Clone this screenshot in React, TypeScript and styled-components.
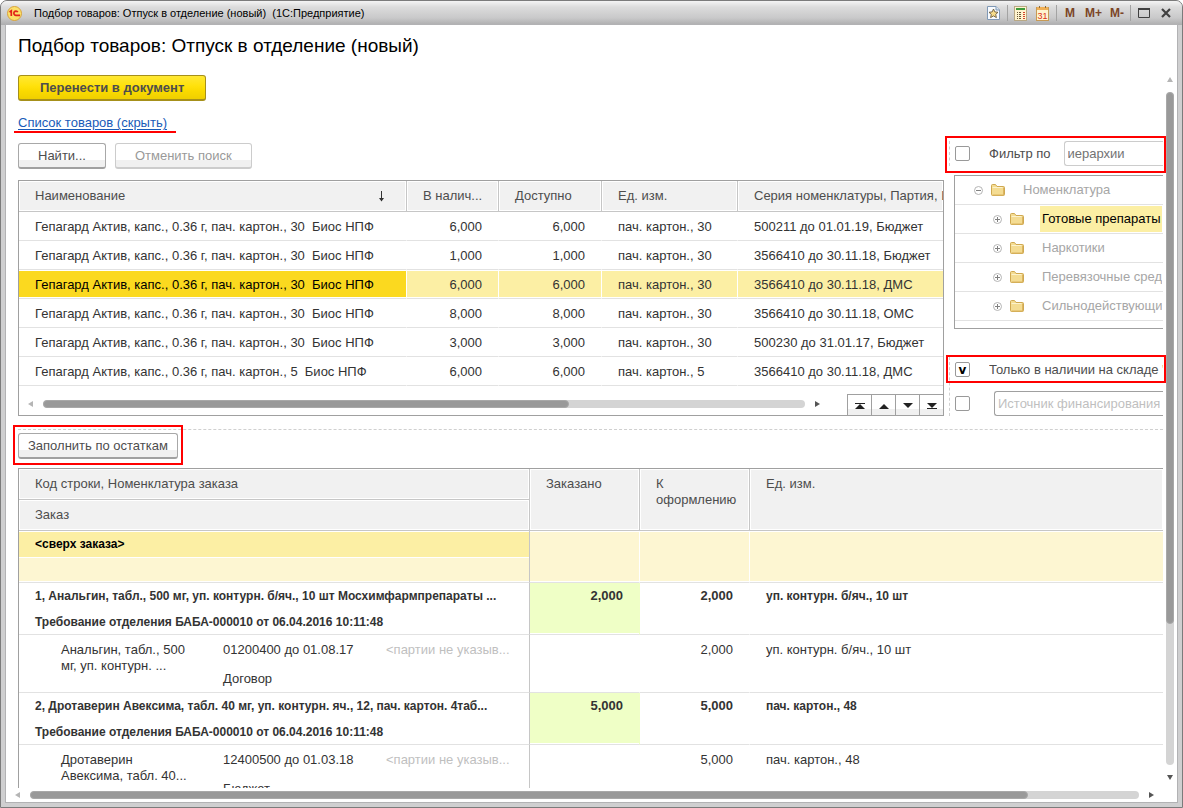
import React from "react";
import styled, { createGlobalStyle, css } from "styled-components";

const GlobalStyle = createGlobalStyle`
  *, *::before, *::after { box-sizing: border-box; }
  body { margin: 0; background: #fff; }
  body, button, input, table {
    font-family: "Liberation Sans", Arial, sans-serif;
    font-size: 13px;
    line-height: 16px;
    color: #333;
  }
`;

/* ---------- window frame ---------- */

const Window = styled.div`
  display: flex;
  flex-direction: column;
  height: 100vh;
  padding: 0 5px 5px;
  border: 1px solid #7b7b7b;
  border-radius: 7px 7px 0 0;
  background: #cfcfd0;
  overflow: hidden;
`;

const TitleBar = styled.header`
  display: flex;
  align-items: center;
  flex: none;
  height: 24px;
  margin: 0 -5px;
  padding: 0 9px 0 6px;
  background: linear-gradient(#f4f4f4, #dcdcdc 25%, #c9c9ca 70%, #adadae);
`;

const WindowTitle = styled.div`
  flex: 1;
  margin-left: 12px;
  font-size: 11px;
  color: #000;
  white-space: pre;
`;

const TitleTools = styled.div`
  display: flex;
  align-items: center;
  gap: 8px;
`;

const TitleDivider = styled.span`
  width: 1px;
  height: 16px;
  margin: 0 -2px;
  background: #a3a3a3;
`;

const TitleButton = styled.button`
  display: flex;
  align-items: center;
  justify-content: center;
  min-width: 14px;
  height: 18px;
  padding: 0;
  border: 0;
  background: none;
  font-size: 12px;
  font-weight: bold;
  color: #7b4526;
`;

const Client = styled.main`
  display: flex;
  flex-direction: column;
  flex: 1;
  min-height: 0;
  background: #fff;
  box-shadow: 0 0 0 1px #b2b2b4;
`;

const Heading = styled.h1`
  flex: none;
  margin: 0;
  padding: 9px 12px 17px;
  font-size: 19px;
  line-height: 24px;
  font-weight: normal;
  color: #000;
`;

const Workspace = styled.div`
  display: flex;
  flex: 1;
  min-height: 0;
`;

const Pane = styled.div`
  display: flex;
  flex-direction: column;
  flex: 1;
  min-width: 0;
  padding-left: 12px;
`;

/* ---------- scroll bars ---------- */

const ScrollBar = styled.div<{ $vertical?: boolean }>`
  display: flex;
  align-items: center;
  flex-direction: ${(p) => (p.$vertical ? "column" : "row")};
  flex: none;
  gap: 10px;
`;

const PaneVScroll = styled(ScrollBar)`
  width: 8px;
  margin: 2px 3px 8px;
`;

const PaneHScroll = styled(ScrollBar)`
  padding: 3px 23px 3px 9px;
`;

const ScrollTrack = styled.div<{ $vertical?: boolean }>`
  flex: 1;
  display: flex;
  flex-direction: ${(p) => (p.$vertical ? "column" : "row")};
  ${(p) => (p.$vertical ? "width: 8px;" : "height: 8px;")}
  border-radius: 4px;
  background: #d4d4d4;
`;

const ScrollThumb = styled.div<{ $share: number }>`
  flex: 0 0 ${(p) => p.$share}%;
  border: 1px solid #a8a8a8;
  border-radius: 4px;
  background: #999;
`;

/* ---------- controls ---------- */

const Button = styled.button`
  height: 26px;
  padding: 0 19px;
  border: 1px solid #a8a8a8;
  border-bottom: 2px solid #a0a0a0;
  border-radius: 3px;
  background: linear-gradient(#fff 0 70%, #f0f0f0 70%);
  color: #4d4d4d;
  white-space: nowrap;

  &:disabled {
    border-color: #ccc;
    color: #999;
  }
`;

const PrimaryButton = styled(Button)`
  align-self: flex-start;
  flex: none;
  padding: 0 21px;
  border-color: #a6901a;
  background: linear-gradient(#ffe834, #ffe10a 45%, #fada00 65%, #efcf00);
  font-weight: bold;
`;

const FillButton = styled(Button)`
  padding: 0 9px;
`;

const CheckBox = styled.input`
  appearance: none;
  display: grid;
  place-items: center;
  flex: none;
  width: 15px;
  height: 15px;
  margin: 0;
  border: 1px solid #999;
  border-radius: 2px;
  background: #fff;

  &:checked::before {
    content: "v";
    font-family: "DejaVu Sans", sans-serif;
    font-size: 12px;
    line-height: 12px;
    font-weight: bold;
    color: #000;
  }
`;

const TextField = styled.input<{ $strong?: boolean }>`
  flex: 1;
  min-width: 0;
  height: 25px;
  padding: 0 3px;
  border: 1px solid ${(p) => (p.$strong ? "#a0a0a0" : "#ccc")};
  border-right: 0;
  border-radius: 3px 0 0 3px;
  background: #fff;
  color: #737373;
  outline: 0;

  &::placeholder {
    color: #bfbfbf;
    opacity: 1;
  }
`;

const Highlight = styled.span<{ $inset: string }>`
  position: absolute;
  inset: ${(p) => p.$inset};
  border: 2px solid #f00;
  pointer-events: none;
`;

const Underscore = styled.span`
  position: absolute;
  inset: auto -9px -2px -4px;
  height: 2px;
  background: #f00;
`;

/* ---------- goods section ---------- */

const GoodsSection = styled.section`
  display: flex;
  flex: none;
  gap: 5px;
`;

const GoodsColumn = styled.div`
  display: flex;
  flex-direction: column;
  flex: 1;
  min-width: 0;
`;

const ToggleLine = styled.div`
  position: relative;
  align-self: flex-start;
  margin-top: 14px;
`;

const ToggleLink = styled.a`
  color: #1a5bb8;
  text-decoration: underline;
  text-underline-offset: 2px;
`;

const SearchBar = styled.div`
  display: flex;
  gap: 9px;
  margin: 12px 0 11px;
`;

const GridFrame = styled.div`
  border: 1px solid #a0a0a0;
  overflow: hidden;
`;

const DataTable = styled.table`
  width: 100%;
  table-layout: fixed;
  border-collapse: separate;
  border-spacing: 0;
`;

const Column = styled.col<{ $width?: number }>`
  width: ${(p) => (p.$width ? `${p.$width}px` : "auto")};
`;

const HeadCell = styled.th<{ $tall?: boolean; $edge?: boolean }>`
  height: 31px;
  padding: ${(p) => (p.$tall ? "7px 15px 0 16px" : "0 15px 0 16px")};
  vertical-align: ${(p) => (p.$tall ? "top" : "middle")};
  border-right: 1px solid #c6c6c6;
  border-bottom: 1px solid #c6c6c6;
  background: #f1f1f1;
  box-shadow: inset 0 0 0 1px #fff;
  font-weight: normal;
  text-align: left;
  color: #4d4d4d;
  white-space: ${(p) => (p.$tall ? "normal" : "nowrap")};
  overflow: hidden;

  ${(p) => !p.$edge && "&:last-child { border-right: 0; }"}
`;

const SortHeader = styled.span`
  display: flex;
  align-items: center;
  justify-content: space-between;
  padding-right: 6px;
`;

const GoodsRow = styled.tr<{ $selected?: boolean }>`
  td {
    height: 29px;
    padding: 1px 16px 0;
    border-bottom: 1px solid #e2e2e2;
    border-right: 1px solid transparent;
    white-space: pre;
    overflow: hidden;
  }
  td:last-child { border-right: 0; }
  ${(p) =>
    p.$selected &&
    css`
      td {
        border-right-color: #fff;
        background: #fcefa4;
        box-shadow: inset 0 1px #fff, inset 0 -1px #fff;
      }
      td:first-child {
        background: #fbd91f;
        color: #000;
      }
    `}
`;

const NumberCell = styled.td`
  text-align: right;
`;

const GridFooter = styled.div`
  display: flex;
  align-items: flex-end;
  justify-content: space-between;
  gap: 27px;
  height: 29px;
  padding-left: 9px;
`;

const GridHScroll = styled(ScrollBar)`
  flex: 1;
  padding-bottom: 7px;
`;

const RowButtons = styled.div`
  display: flex;
`;

const RowButton = styled.button`
  display: grid;
  place-items: center;
  width: 24px;
  height: 21px;
  padding: 1px 0 0;
  border: solid #a0a0a0;
  border-width: 1px 0 0 1px;
  background: linear-gradient(#fff 0 70%, #f0f0f0 70%);
`;

/* ---------- filter panel ---------- */

const FilterColumn = styled.aside`
  flex: none;
  width: 214px;
  padding-top: 40px;
`;

const FilterGroup = styled.div`
  display: flex;
  flex-direction: column;
  gap: 9px;
  border-left: 1px dashed #d0d0d0;
`;

const FilterRow = styled.div`
  position: relative;
  display: flex;
  align-items: center;
  height: 25px;
  padding-left: 5px;
`;

const FilterLabel = styled.label`
  margin-left: 19px;
  padding-right: 13px;
  color: #4d4d4d;
  white-space: nowrap;
`;

const ClippedLabel = styled(FilterLabel)`
  flex: 1;
  min-width: 0;
  padding: 0;
  overflow: hidden;
`;

const SourceField = styled(TextField)`
  margin-left: 24px;
`;

const Tree = styled.ul`
  height: 154px;
  margin: 9px 0 28px 5px;
  padding: 0;
  border: 1px solid #a0a0a0;
  border-right: 0;
  list-style: none;
  overflow: hidden;
`;

const TreeItem = styled.li<{ $level: number; $selected?: boolean }>`
  display: flex;
  align-items: center;
  height: 29px;
  padding-left: ${(p) => (p.$level ? 38 : 19)}px;
  border-bottom: 1px solid #e2e2e2;
  color: #a6a6a6;
  white-space: nowrap;

  svg + svg { margin-left: 8px; }

  span {
    flex: 1;
    margin: 0 1px 0 16px;
    padding: 5px 0 5px 2px;
    overflow: hidden;
    ${(p) => p.$selected && "background: #fcefa4; color: #000;"}
  }
`;

/* ---------- order section ---------- */

const OrderBar = styled.div`
  flex: none;
  margin: 13px 0 9px;
  padding-top: 3px;
  border-top: 1px dashed #d0d0d0;
`;

const OrderAction = styled.div`
  position: relative;
  display: inline-flex;
  vertical-align: top;
`;

const OrderFrame = styled.section`
  flex: 1;
  min-height: 0;
  border: solid #a0a0a0;
  border-width: 1px 0 0 1px;
  overflow: hidden;
`;

type Tone = "over" | "order" | "batch";

const OrderRow = styled.tr<{ $tone: Tone }>`
  td {
    height: ${(p) => (p.$tone === "batch" ? 58 : 52)}px;
    padding: ${(p) => (p.$tone === "batch" ? 7 : 5)}px 16px 0;
    border-right: 1px solid transparent;
    border-bottom: 1px solid #e2e2e2;
    vertical-align: top;
    white-space: nowrap;
    font-weight: ${(p) => (p.$tone === "batch" ? "normal" : "bold")};
    overflow: hidden;
  }
  ${(p) =>
    p.$tone === "over" &&
    css`
      td {
        padding: 0;
        border-right-color: #fff;
        background: #fdf6d2;
        box-shadow: inset 0 1px #fff, inset 0 -1px #fff;
      }
    `}
  td:first-child { border-right-color: #c6c6c6; }
  td:last-child { border-right: 0; }
`;

const OverCaption = styled.div`
  height: 26px;
  margin-top: 1px;
  padding: 4px 16px;
  border-bottom: 1px solid #fff;
  background: #fcefa4;
  font-size: 12px;
  color: #000;
`;

const OrderLines = styled.div`
  font-size: 12px;
  line-height: 16px;

  div + div { margin-top: 10px; }
`;

const OrderedCell = styled(NumberCell)<{ $filled?: boolean }>`
  ${(p) => p.$filled && "background: #efffc6; box-shadow: inset 0 -1px #fff;"}
`;

const UnitCell = styled.td<{ $bold?: boolean }>`
  font-size: ${(p) => (p.$bold ? 12 : 13)}px;
`;

const BatchGrid = styled.div`
  display: grid;
  grid-template-columns: 162px 163px 1fr;
  padding-left: 26px;
`;

const BatchFund = styled.div`
  margin-top: 13px;
`;

const Muted = styled.div`
  margin-right: -16px;
  color: #bfbfbf;
`;

/* ---------- icons ---------- */

type Dir = "up" | "down" | "left" | "right";
const arrowPoints: Record<Dir, string> = {
  up: "0,5 3,0 6,5",
  down: "0,0 3,5 6,0",
  left: "5,0 0,3 5,6",
  right: "0,0 5,3 0,6",
};

const ArrowSvg = styled.svg`
  flex: none;
`;

const Arrow = ({ dir, color }: { dir: Dir; color: string }) => {
  const flat = dir === "up" || dir === "down";
  return (
    <ArrowSvg width={flat ? 6 : 5} height={flat ? 5 : 6}>
      <polygon points={arrowPoints[dir]} fill={color} />
    </ArrowSvg>
  );
};

const RowIcon = ({ up, bar }: { up?: boolean; bar?: boolean }) => (
  <svg width="12" height="8" viewBox="0 0 12 8" fill="#222">
    {up ? <polygon points="1,7 6,2 11,7" /> : <polygon points="1,1 6,6 11,1" />}
    {bar && <rect x="1" y={up ? 1 : 6} width="10" height="1" />}
  </svg>
);

const Logo = () => (
  <svg width="15" height="15" viewBox="0 0 15 15">
    <circle cx="7.500" cy="7.500" r="7" fill="#fbe06a" stroke="#d8a33c" />
    <path d="M2.500 6 4.300 4.800V10M10.800 6.200A2.100 2.100 0 1 0 8.800 9.300H13" fill="none" stroke="#e2231a" strokeWidth="1.700" />
  </svg>
);

const StarIcon = () => (
  <svg width="13" height="14" viewBox="0 0 13 14">
    <path d="M.5.5h8.500l3.500 3.500v9.500H.5z" fill="#f8fbff" stroke="#7f98b5" />
    <path d="M9 .5V4h3.500" fill="#dbe6f2" stroke="#7f98b5" />
    <path d="m6.500 3 1.300 2.900 3.200.4-2.300 2.100.7 3.200-2.900-1.700-2.900 1.700.7-3.200-2.300-2.100 3.200-.4z" fill="#f7dc8a" stroke="#6b5a3a" strokeWidth=".9" />
  </svg>
);

const CalcIcon = () => (
  <svg width="13" height="15" viewBox="0 0 13 15">
    <rect x=".5" y=".5" width="12" height="14" fill="#fff4cf" stroke="#b9a884" />
    <rect x="2" y="2" width="9" height="2" fill="#3e9b3a" />
    {[6, 8, 10, 12].map((y) => (
      <g key={y}>
        <rect x="3" y={y} width="1" height="1" fill="#6b5a3a" />
        <rect x="5" y={y} width="2" height="1" fill="#6b5a3a" />
        <rect x="9" y={y} width="2" height="1" fill="#d2452c" />
      </g>
    ))}
  </svg>
);

const CalendarIcon = () => (
  <svg width="13" height="15" viewBox="0 0 13 15">
    <rect x=".5" y="1.500" width="12" height="13" fill="#fff4cf" stroke="#c79a55" />
    <rect x="1" y="1" width="11" height="3" fill="#f0b056" />
    <path d="M3.500 0v2M9.500 0v2" stroke="#8a6a3c" />
    <text x="6.500" y="13" textAnchor="middle" fontSize="9" fontWeight="normal" fill="#dc3018">31</text>
  </svg>
);

const MaximizeIcon = () => (
  <svg width="12" height="10" viewBox="0 0 12 10">
    <path d="M.5 1h11v8.500H.5z" fill="none" stroke="#404040" />
    <path d="M0 1h12" stroke="#404040" strokeWidth="2" />
  </svg>
);

const CloseIcon = () => (
  <svg width="10" height="10" viewBox="0 0 10 10">
    <path d="m1 1 8 8M9 1 1 9" stroke="#404040" strokeWidth="2.200" />
  </svg>
);

const SortIcon = () => (
  <svg width="7" height="11" viewBox="0 0 7 11">
    <path d="M3.500 0v10" stroke="#333" />
    <path d="M1 7h5L3.500 10.500z" fill="#333" />
  </svg>
);

const Expander = ({ open }: { open?: boolean }) => (
  <svg width="9" height="9" viewBox="0 0 9 9" fill="none">
    <circle cx="4.500" cy="4.500" r="4" stroke="#b5b5b5" />
    <path d={open ? "M2 4.500h5" : "M2 4.500h5M4.500 2v5"} stroke="#808080" />
  </svg>
);

const Folder = () => (
  <svg width="14" height="12" viewBox="0 0 14 12">
    <path d="M.5 10.500v-9q0-1 1-1h3l1.500 2h6.500q1 0 1 1v7q0 1-1 1h-11q-1 0-1-1z" fill="#f4dc92" stroke="#cfa850" />
    <path d="M1.500 3.500h10" stroke="#fcf2cc" />
    <path d="M12.500 3.500v7.500H1.500" fill="none" stroke="#dcb560" />
  </svg>
);

/* ---------- data ---------- */

const goods = [
  ["30", "6,000", "500211 до 01.01.19, Бюджет"],
  ["30", "1,000", "3566410 до 30.11.18, Бюджет"],
  ["30", "6,000", "3566410 до 30.11.18, ДМС"],
  ["30", "8,000", "3566410 до 30.11.18, ОМС"],
  ["30", "3,000", "500230 до 31.01.17, Бюджет"],
  ["5", "6,000", "3566410 до 30.11.18, ДМС"],
];
const selectedGoods = 2;

const tree = ["Готовые препараты", "Наркотики", "Перевязочные средства", "Сильнодействующие"];

const orders = [
  {
    title: "1, Анальгин, табл., 500 мг, уп. контурн. б/яч., 10 шт Мосхимфармпрепараты ...",
    qty: "2,000",
    unit: "уп. контурн. б/яч., 10 шт",
    name: ["Анальгин, табл., 500", "мг, уп. контурн. ..."],
    batch: "01200400 до 01.08.17",
    fund: "Договор",
  },
  {
    title: "2, Дротаверин Авексима, табл. 40 мг, уп. контурн. яч., 12, пач. картон. 4таб...",
    qty: "5,000",
    unit: "пач. картон., 48",
    name: ["Дротаверин", "Авексима, табл. 40..."],
    batch: "12400500 до 01.03.18",
    fund: "Бюджет",
  },
];

/* ---------- page ---------- */

export default function App() {
  return (
    <>
      <GlobalStyle />
      <Window>
        <TitleBar>
          <Logo />
          <WindowTitle>{"Подбор товаров: Отпуск в отделение (новый)  (1С:Предприятие)"}</WindowTitle>
          <TitleTools>
            <TitleButton aria-label="Избранное"><StarIcon /></TitleButton>
            <TitleDivider />
            <TitleButton aria-label="Калькулятор"><CalcIcon /></TitleButton>
            <TitleButton aria-label="Календарь"><CalendarIcon /></TitleButton>
            <TitleDivider />
            <TitleButton>M</TitleButton>
            <TitleButton>M+</TitleButton>
            <TitleButton>M-</TitleButton>
            <TitleDivider />
            <TitleButton aria-label="Развернуть"><MaximizeIcon /></TitleButton>
            <TitleButton aria-label="Закрыть"><CloseIcon /></TitleButton>
          </TitleTools>
        </TitleBar>

        <Client>
          <Heading>Подбор товаров: Отпуск в отделение (новый)</Heading>
          <Workspace>
            <Pane>
              <PrimaryButton>Перенести в документ</PrimaryButton>

              <GoodsSection>
                <GoodsColumn>
                  <ToggleLine>
                    <ToggleLink href="#goods">Список товаров (скрыть)</ToggleLink>
                    <Underscore />
                  </ToggleLine>
                  <SearchBar>
                    <Button>Найти...</Button>
                    <Button disabled>Отменить поиск</Button>
                  </SearchBar>

                  <GridFrame id="goods">
                    <DataTable>
                      <colgroup>
                        <Column $width={388} />
                        <Column $width={92} />
                        <Column $width={103} />
                        <Column $width={136} />
                        <Column />
                      </colgroup>
                      <thead>
                        <tr>
                          <HeadCell><SortHeader>Наименование<SortIcon /></SortHeader></HeadCell>
                          <HeadCell>В налич...</HeadCell>
                          <HeadCell>Доступно</HeadCell>
                          <HeadCell>Ед. изм.</HeadCell>
                          <HeadCell>Серия номенклатуры, Партия, Источник</HeadCell>
                        </tr>
                      </thead>
                      <tbody>
                        {goods.map(([pack, qty, series], i) => (
                          <GoodsRow key={i} $selected={i === selectedGoods}>
                            <td>{`Гепагард Актив, капс., 0.36 г, пач. картон., ${pack}  Биос НПФ`}</td>
                            <NumberCell>{qty}</NumberCell>
                            <NumberCell>{qty}</NumberCell>
                            <td>{`пач. картон., ${pack}`}</td>
                            <td>{series}</td>
                          </GoodsRow>
                        ))}
                      </tbody>
                    </DataTable>
                    <GridFooter>
                      <GridHScroll>
                        <Arrow dir="left" color="#b5b5b5" />
                        <ScrollTrack><ScrollThumb $share={69} /></ScrollTrack>
                        <Arrow dir="right" color="#555" />
                      </GridHScroll>
                      <RowButtons>
                        <RowButton aria-label="В начало"><RowIcon up bar /></RowButton>
                        <RowButton aria-label="Вверх"><RowIcon up /></RowButton>
                        <RowButton aria-label="Вниз"><RowIcon /></RowButton>
                        <RowButton aria-label="В конец"><RowIcon bar /></RowButton>
                      </RowButtons>
                    </GridFooter>
                  </GridFrame>
                </GoodsColumn>

                <FilterColumn>
                  <FilterGroup>
                    <FilterRow>
                      <CheckBox type="checkbox" id="by-filter" />
                      <FilterLabel htmlFor="by-filter">Фильтр по</FilterLabel>
                      <TextField aria-label="Фильтр по" defaultValue="иерархии" />
                      <Highlight $inset="-5px -3px -7px -5px" />
                    </FilterRow>
                  </FilterGroup>
                  <Tree>
                    <TreeItem $level={0}><Expander open /><Folder /><span>Номенклатура</span></TreeItem>
                    {tree.map((name, i) => (
                      <TreeItem key={name} $level={1} $selected={i === 0}>
                        <Expander /><Folder /><span>{name}</span>
                      </TreeItem>
                    ))}
                  </Tree>
                  <FilterGroup>
                    <FilterRow>
                      <CheckBox type="checkbox" id="in-stock" defaultChecked />
                      <ClippedLabel htmlFor="in-stock">Только в наличии на складе "Аптека"</ClippedLabel>
                      <Highlight $inset="-2px -3px -1px -4px" />
                    </FilterRow>
                    <FilterRow>
                      <CheckBox type="checkbox" aria-label="Источник финансирования" />
                      <SourceField $strong aria-label="Источник финансирования" placeholder="Источник финансирования" />
                    </FilterRow>
                  </FilterGroup>
                </FilterColumn>
              </GoodsSection>

              <OrderBar>
                <OrderAction>
                  <FillButton>Заполнить по остаткам</FillButton>
                  <Highlight $inset="-8px -5px -6px -5px" />
                </OrderAction>
              </OrderBar>

              <OrderFrame>
                <DataTable>
                  <colgroup>
                    <Column $width={511} />
                    <Column $width={110} />
                    <Column $width={110} />
                    <Column />
                  </colgroup>
                  <thead>
                    <tr>
                      <HeadCell>Код строки, Номенклатура заказа</HeadCell>
                      <HeadCell $tall rowSpan={2}>Заказано</HeadCell>
                      <HeadCell $tall rowSpan={2}>К оформлению</HeadCell>
                      <HeadCell $tall rowSpan={2}>Ед. изм.</HeadCell>
                    </tr>
                    <tr>
                      <HeadCell $edge>Заказ</HeadCell>
                    </tr>
                  </thead>
                  <tbody>
                    <OrderRow $tone="over">
                      <td><OverCaption>{"<сверх заказа>"}</OverCaption></td>
                      <td />
                      <td />
                      <td />
                    </OrderRow>
                    {orders.map((o) => (
                      <React.Fragment key={o.title}>
                        <OrderRow $tone="order">
                          <td>
                            <OrderLines>
                              <div>{o.title}</div>
                              <div>Требование отделения БАБА-000010 от 06.04.2016 10:11:48</div>
                            </OrderLines>
                          </td>
                          <OrderedCell $filled>{o.qty}</OrderedCell>
                          <NumberCell>{o.qty}</NumberCell>
                          <UnitCell $bold>{o.unit}</UnitCell>
                        </OrderRow>
                        <OrderRow $tone="batch">
                          <td>
                            <BatchGrid>
                              <div>{o.name[0]}<br />{o.name[1]}</div>
                              <div>{o.batch}<BatchFund>{o.fund}</BatchFund></div>
                              <Muted>{"<партии не указыв..."}</Muted>
                            </BatchGrid>
                          </td>
                          <OrderedCell />
                          <NumberCell>{o.qty}</NumberCell>
                          <UnitCell>{o.unit}</UnitCell>
                        </OrderRow>
                      </React.Fragment>
                    ))}
                  </tbody>
                </DataTable>
              </OrderFrame>
            </Pane>
            <PaneVScroll $vertical>
              <Arrow dir="up" color="#b5b5b5" />
              <ScrollTrack $vertical><ScrollThumb $share={79} /></ScrollTrack>
              <Arrow dir="down" color="#555" />
            </PaneVScroll>
          </Workspace>
          <PaneHScroll>
            <Arrow dir="left" color="#b5b5b5" />
            <ScrollTrack><ScrollThumb $share={90} /></ScrollTrack>
            <Arrow dir="right" color="#555" />
          </PaneHScroll>
        </Client>
      </Window>
    </>
  );
}
